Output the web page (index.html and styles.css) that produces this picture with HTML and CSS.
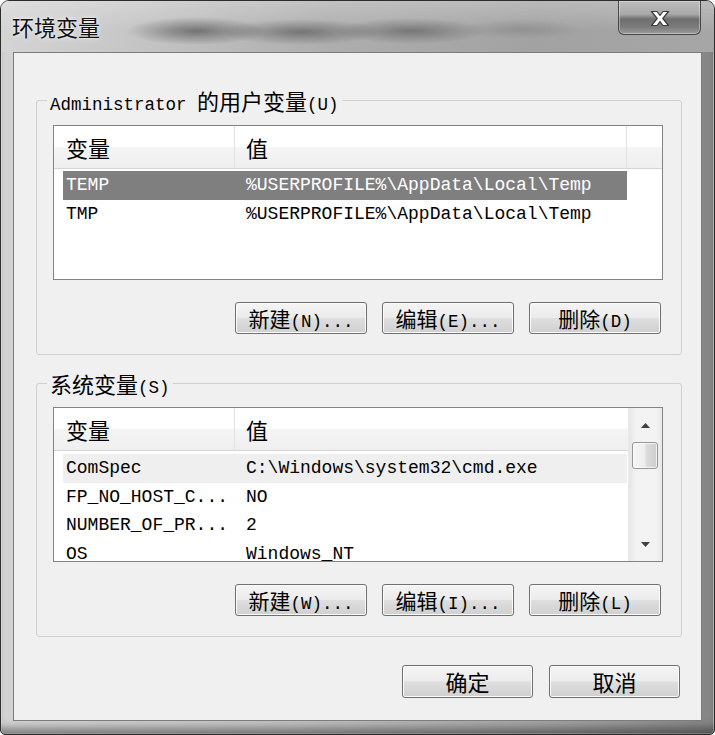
FILE: index.html
```html
<!DOCTYPE html>
<html lang="zh-CN">
<head>
<meta charset="utf-8">
<title>环境变量</title>
<link rel="stylesheet" href="styles.css">
</head>
<body>
<div class="window">
  <div class="titlebar">
    <span class="title zh">环境变量</span>
    <button class="close" aria-label="关闭">
      <svg width="22" height="17" viewBox="0 0 22 17"><path d="M2.5 1.5 H8 L11 5.5 L14 1.5 H19.5 L13.8 8.5 L19.5 15.5 H14 L11 11.5 L8 15.5 H2.5 L8.2 8.5 Z" fill="#fff" stroke="#3a3a3a" stroke-width="1.2" stroke-linejoin="round"/></svg>
    </button>
  </div>
  <div class="frame-body">
    <div class="client">
      <fieldset class="group group-user">
        <legend>Administrator <span class="zh">的用户变量</span>(U)</legend>
        <div class="list">
          <div class="list-main">
            <div class="list-head">
              <div class="hc hc1 zh">变量</div>
              <div class="hc hc2 zh">值</div>
              <div class="hc hc3"></div>
            </div>
            <div class="rows">
              <div class="row selected"><span class="c1">TEMP</span><span class="c2">%USERPROFILE%\AppData\Local\Temp</span></div>
              <div class="row"><span class="c1">TMP</span><span class="c2">%USERPROFILE%\AppData\Local\Temp</span></div>
            </div>
          </div>
        </div>
        <div class="btn-row">
          <button class="btn"><span class="zh">新建</span>(N)...</button>
          <button class="btn"><span class="zh">编辑</span>(E)...</button>
          <button class="btn"><span class="zh">删除</span>(D)</button>
        </div>
      </fieldset>

      <fieldset class="group group-sys">
        <legend><span class="zh">系统变量</span>(S)</legend>
        <div class="list">
          <div class="list-main">
            <div class="list-head">
              <div class="hc hc1 zh">变量</div>
              <div class="hc hc2 zh">值</div>
            </div>
            <div class="rows rows-sys">
              <div class="row focused"><span class="c1">ComSpec</span><span class="c2">C:\Windows\system32\cmd.exe</span></div>
              <div class="row"><span class="c1">FP_NO_HOST_C...</span><span class="c2">NO</span></div>
              <div class="row"><span class="c1">NUMBER_OF_PR...</span><span class="c2">2</span></div>
              <div class="row"><span class="c1">OS</span><span class="c2">Windows_NT</span></div>
            </div>
          </div>
          <div class="scrollbar">
            <div class="sb-btn"><svg width="9" height="5" viewBox="0 0 9 5"><path d="M0 5 L4.5 0 L9 5 Z" fill="#404040"/></svg></div>
            <div class="sb-thumb"></div>
            <div class="sb-track"></div>
            <div class="sb-btn"><svg width="9" height="5" viewBox="0 0 9 5"><path d="M0 0 L9 0 L4.5 5 Z" fill="#404040"/></svg></div>
          </div>
        </div>
        <div class="btn-row">
          <button class="btn"><span class="zh">新建</span>(W)...</button>
          <button class="btn"><span class="zh">编辑</span>(I)...</button>
          <button class="btn"><span class="zh">删除</span>(L)</button>
        </div>
      </fieldset>

      <div class="dialog-buttons">
        <button class="btn btn-main"><span class="zh">确定</span></button>
        <button class="btn btn-main"><span class="zh">取消</span></button>
      </div>
    </div>
  </div>
</div>
</body>
</html>
```

FILE: styles.css
```css
html, body {
  margin: 0;
  padding: 0;
  background: #ffffff;
}

body {
  font-family: "Liberation Mono", "Noto Sans CJK SC", monospace;
  font-size: 18px;
  color: #000;
}

.zh {
  font-family: "Noto Sans CJK SC", "Noto Sans CJK JP", sans-serif;
  font-size: 22px;
}

.window {
  width: 715px;
  height: 735px;
  box-sizing: border-box;
  border: 1px solid #2c2c2c;
  border-radius: 9px 9px 5px 5px;
  overflow: hidden;
  display: flex;
  flex-direction: column;
  background: linear-gradient(to right, #d3d3d3 0%, #c2c2c2 40%, #a0a0a0 80%, #858585 100%);
  box-shadow: inset 0 0 0 1px rgba(255, 255, 255, 0.45);
}

.titlebar {
  height: 51px;
  flex: none;
  display: flex;
  justify-content: space-between;
  align-items: flex-start;
  padding: 0 13px 0 11px;
  background:
    radial-gradient(ellipse 70px 14px at 195px 30px, rgba(40, 40, 40, 0.5), rgba(40, 40, 40, 0)),
    radial-gradient(ellipse 80px 13px at 300px 31px, rgba(45, 45, 45, 0.45), rgba(45, 45, 45, 0)),
    radial-gradient(ellipse 75px 13px at 410px 30px, rgba(50, 50, 50, 0.42), rgba(50, 50, 50, 0)),
    radial-gradient(ellipse 60px 10px at 520px 28px, rgba(70, 70, 70, 0.2), rgba(70, 70, 70, 0)),
    linear-gradient(to bottom, rgba(255, 255, 255, 0.25), rgba(255, 255, 255, 0) 60%),
    linear-gradient(to right, #d4d4d4 0%, #c6c6c6 18%, #aeaeae 45%, #a2a2a2 75%, #a6a6a6 100%);
}

.title {
  line-height: 51px;
  font-size: 22px;
  color: #111;
  text-shadow: 0 0 6px rgba(255, 255, 255, 0.85), 0 0 2px rgba(255, 255, 255, 0.9);
}

.close {
  width: 83px;
  height: 34px;
  margin: 0;
  padding: 0;
  border: 1px solid #474747;
  border-top: none;
  border-radius: 0 0 6px 6px;
  background: linear-gradient(to bottom, #bcbcbc 0%, #a9a9a9 40%, #6f6f6f 55%, #7c7c7c 80%, #9c9c9c 100%);
  box-shadow: inset 0 0 0 1px rgba(255, 255, 255, 0.35);
  display: flex;
  align-items: center;
  justify-content: center;
}

.close svg {
  display: block;
  margin-top: 1px;
}

.frame-body {
  flex: 1;
  display: flex;
  padding: 0 12px 13px 12px;
  box-shadow: inset 0 -10px 8px -4px rgba(0, 0, 0, 0.4);
}

.client {
  flex: 1;
  border: 1px solid #7c7c7c;
  background: #f0f0f0;
  display: flex;
  flex-direction: column;
}

.group {
  margin: 0 19px 0 22px;
  border: 1px solid #d0d0d0;
  border-radius: 3px;
  padding: 14px 18px 20px 16px;
  min-width: 0;
}

.group-user {
  margin-top: 36px;
}

.group-sys {
  margin-top: 17px;
  padding-top: 13px;
}

.group legend {
  padding: 0 3px;
  margin-left: -6px;
  line-height: 22px;
  height: 22px;
  font-size: 17.5px;
  white-space: nowrap;
}

.group legend .zh {
  font-size: 22px;
}

.list {
  height: 155px;
  box-sizing: border-box;
  border: 1px solid #838383;
  background: #fff;
  display: flex;
  overflow: hidden;
}

.list-main {
  flex: 1;
  min-width: 0;
  display: flex;
  flex-direction: column;
  overflow: hidden;
}

.list-head {
  flex: none;
  display: flex;
  height: 42px;
  border-bottom: 1px solid #d5d5d5;
  background: linear-gradient(to bottom, #ffffff 0%, #ffffff 48%, #f4f4f4 52%, #efefef 100%);
}

.hc {
  line-height: 42px;
  box-sizing: border-box;
}

.hc1 {
  width: 181px;
  padding-left: 12px;
  border-right: 1px solid #e2e2e2;
}

.hc2 {
  width: 392px;
  padding-left: 11px;
  border-right: 1px solid #e2e2e2;
}

.hc3 {
  flex: 1;
}

.group-sys .hc2 {
  flex: 1;
  border-right: none;
}

.rows {
  padding-top: 2px;
}

.rows-sys {
  padding-top: 3px;
}

.row {
  display: flex;
  margin-left: 9px;
  width: 564px;
  height: 29px;
  line-height: 29px;
  font-size: 18px;
  white-space: nowrap;
}

.rows-sys .row {
  height: 28.5px;
  line-height: 29px;
}

.row .c1 {
  width: 172px;
  padding-left: 3px;
  box-sizing: border-box;
  overflow: hidden;
}

.row .c2 {
  padding-left: 11px;
}

.row.selected {
  background: #7f7f7f;
  color: #fff;
}

.row.focused {
  background: #efefef;
}

.scrollbar {
  width: 33px;
  flex: none;
  display: flex;
  flex-direction: column;
  background: linear-gradient(to right, #e6e6e6 0%, #f2f2f2 20%, #f3f3f3 80%, #e8e8e8 100%);
  border-left: 1px solid #e9e9e9;
}

.sb-btn {
  height: 34px;
  display: flex;
  align-items: center;
  justify-content: center;
}

.sb-btn svg {
  display: block;
}

.sb-thumb {
  height: 27px;
  margin: 0 4px 0 3px;
  box-sizing: border-box;
  border: 1px solid #979797;
  border-radius: 3px;
  background: linear-gradient(to right, #f7f7f7 0%, #ededed 50%, #dcdcdc 55%, #cdcdcd 100%);
  box-shadow: inset 0 0 0 1px rgba(255, 255, 255, 0.7);
}

.sb-track {
  flex: 1;
}

.btn-row {
  display: flex;
  justify-content: flex-end;
  gap: 15px;
  margin-top: 22px;
  padding-right: 2px;
}

.btn {
  width: 132px;
  height: 32px;
  margin: 0;
  padding: 0;
  box-sizing: border-box;
  border: 1px solid #707070;
  border-radius: 3px;
  background: linear-gradient(to bottom, #f4f4f4 0%, #ececec 48%, #dedede 52%, #d0d0d0 100%);
  box-shadow: inset 0 0 0 1px #fbfbfb;
  font-family: "Liberation Mono", "Noto Sans CJK SC", monospace;
  font-size: 17.5px;
  line-height: 30px;
  color: #000;
  white-space: nowrap;
  text-align: center;
}

.btn .zh {
  font-size: 21px;
}

.dialog-buttons {
  display: flex;
  justify-content: flex-end;
  gap: 16px;
  margin-top: 28px;
  padding-right: 21px;
}

.btn-main {
  width: 131px;
  height: 33px;
  line-height: 31px;
}

.btn-main .zh {
  font-size: 22px;
}
```
